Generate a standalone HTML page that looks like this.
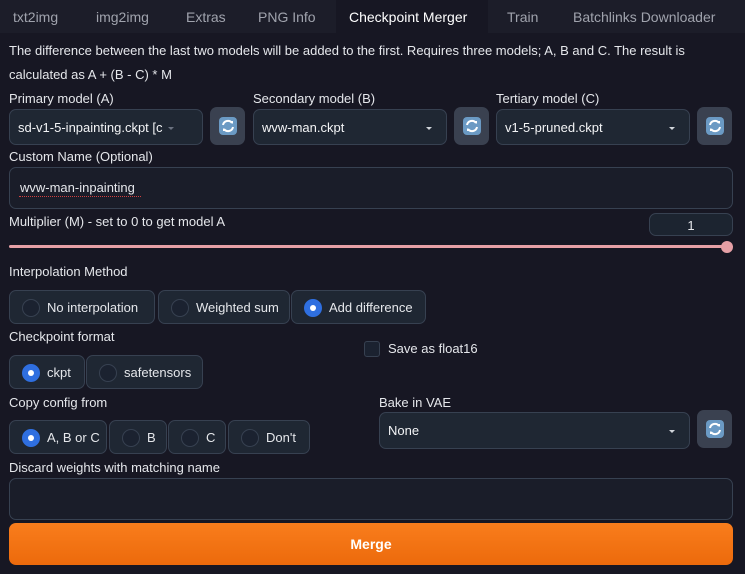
<!DOCTYPE html>
<html><head><style>
*{box-sizing:border-box;margin:0;padding:0}
body{width:745px;height:574px;background:#171723;font-family:"Liberation Sans",sans-serif;color:#e5e7eb;position:relative;overflow:hidden;font-size:13px}
.a{position:absolute;white-space:nowrap}
.tabs{position:absolute;left:0;top:0;width:745px;height:33px;background:#1c1d29}
.tab{position:absolute;top:9px;font-size:14px;color:#a0a3ad}
.act{position:absolute;left:336px;top:0;width:152px;height:33px;background:#171723}
.lbl{position:absolute;font-size:13px;color:#e5e7eb}
.box{position:absolute;background:#1f2733;border:1px solid #374151;border-radius:7px}
.inp{position:absolute;background:#1a1d29;border:1px solid #374151;border-radius:7px}
.dd{font-size:13px;padding:10px 0 0 8px;color:#f3f4f6}
.car{position:absolute;right:14px;top:17px;width:0;height:0;border-left:3px solid transparent;border-right:3px solid transparent;border-top:3px solid #d1d5db}
.btn{position:absolute;width:35px;height:38px;background:#3a4150;border-radius:7px}
.btn svg{position:absolute;left:9px;top:10px}
.r{position:absolute;height:34px;background:#1f2733;border:1px solid #374151;border-radius:7px;font-size:13px;padding:9px 0 0 37px}
.r:before{content:"";position:absolute;left:12px;top:8px;width:16px;height:16px;border-radius:50%;border:1px solid #374151;background:#1b2230}
.r.on:before{background:#2f6fe0;border-color:#2f6fe0}
.r.on:after{content:"";position:absolute;left:18px;top:14px;width:6px;height:6px;border-radius:50%;background:#fff}
</style></head><body>
<div class="tabs"></div><div class="act"></div>
<div class="tab a" style="left:13px">txt2img</div>
<div class="tab a" style="left:96px">img2img</div>
<div class="tab a" style="left:186px">Extras</div>
<div class="tab a" style="left:258px">PNG Info</div>
<div class="tab a" style="left:349px;color:#fff">Checkpoint Merger</div>
<div class="tab a" style="left:507px">Train</div>
<div class="tab a" style="left:573px">Batchlinks Downloader</div>

<div class="lbl a" style="left:9px;top:43px">The difference between the last two models will be added to the first. Requires three models; A, B and C. The result is</div>
<div class="lbl a" style="left:9px;top:67px">calculated as A + (B - C) * M</div>

<div class="lbl a" style="left:9px;top:91px">Primary model (A)</div>
<div class="lbl a" style="left:253px;top:91px">Secondary model (B)</div>
<div class="lbl a" style="left:496px;top:91px">Tertiary model (C)</div>
<div class="box dd" style="left:9px;top:109px;width:194px;height:36px;overflow:hidden">sd-v1-5-inpainting.ckpt [c<div class="car" style="right:28px;border-top-color:#6b7280"></div></div>
<div class="btn" style="left:210px;top:107px"><svg width="18" height="18" viewBox="0 0 18 18"><rect width="18" height="18" rx="4" fill="#6b9ac4"/><path d="M4 8a5 5 0 0 1 9-2M14 10a5 5 0 0 1-9 2" stroke="#fff" stroke-width="2" fill="none"/><path d="M11 4l3 0 0 3zM7 14l-3 0 0-3z" fill="#fff"/></svg></div>
<div class="box dd" style="left:253px;top:109px;width:194px;height:36px">wvw-man.ckpt<div class="car"></div></div>
<div class="btn" style="left:454px;top:107px"><svg width="18" height="18" viewBox="0 0 18 18"><rect width="18" height="18" rx="4" fill="#6b9ac4"/><path d="M4 8a5 5 0 0 1 9-2M14 10a5 5 0 0 1-9 2" stroke="#fff" stroke-width="2" fill="none"/><path d="M11 4l3 0 0 3zM7 14l-3 0 0-3z" fill="#fff"/></svg></div>
<div class="box dd" style="left:496px;top:109px;width:194px;height:36px">v1-5-pruned.ckpt<div class="car"></div></div>
<div class="btn" style="left:697px;top:107px"><svg width="18" height="18" viewBox="0 0 18 18"><rect width="18" height="18" rx="4" fill="#6b9ac4"/><path d="M4 8a5 5 0 0 1 9-2M14 10a5 5 0 0 1-9 2" stroke="#fff" stroke-width="2" fill="none"/><path d="M11 4l3 0 0 3zM7 14l-3 0 0-3z" fill="#fff"/></svg></div>

<div class="lbl a" style="left:9px;top:149px">Custom Name (Optional)</div>
<div class="inp" style="left:9px;top:167px;width:724px;height:42px;padding:12px 0 0 10px;font-size:13px">wvw-man-inpainting</div>
<div class="a" style="left:19px;top:196px;width:122px;border-bottom:1px dotted #d04040"></div>

<div class="lbl a" style="left:9px;top:214px">Multiplier (M) - set to 0 to get model A</div>
<div class="box" style="left:649px;top:213px;width:84px;height:23px;background:#1c2430;text-align:center;padding-top:4px;font-size:13px">1</div>
<div class="a" style="left:9px;top:245px;width:720px;height:3px;background:#e6a0a6;border-radius:2px"></div>
<div class="a" style="left:721px;top:241px;width:12px;height:12px;border-radius:50%;background:#e6a0a6"></div>

<div class="lbl a" style="left:9px;top:264px">Interpolation Method</div>
<div class="r" style="left:9px;top:290px;width:146px">No interpolation</div>
<div class="r" style="left:158px;top:290px;width:132px">Weighted sum</div>
<div class="r on" style="left:291px;top:290px;width:135px">Add difference</div>

<div class="lbl a" style="left:9px;top:329px">Checkpoint format</div>
<div class="a" style="left:364px;top:341px;width:16px;height:16px;border:1px solid #374151;border-radius:3px;background:#1b2230"></div>
<div class="lbl a" style="left:388px;top:341px">Save as float16</div>
<div class="r on" style="left:9px;top:355px;width:76px">ckpt</div>
<div class="r" style="left:86px;top:355px;width:117px">safetensors</div>

<div class="lbl a" style="left:9px;top:395px">Copy config from</div>
<div class="lbl a" style="left:379px;top:395px">Bake in VAE</div>
<div class="r on" style="left:9px;top:420px;width:98px">A, B or C</div>
<div class="r" style="left:109px;top:420px;width:58px">B</div>
<div class="r" style="left:168px;top:420px;width:58px">C</div>
<div class="r" style="left:228px;top:420px;width:82px">Don't</div>
<div class="box dd" style="left:379px;top:412px;width:311px;height:37px">None<div class="car"></div></div>
<div class="btn" style="left:697px;top:410px"><svg width="18" height="18" viewBox="0 0 18 18"><rect width="18" height="18" rx="4" fill="#6b9ac4"/><path d="M4 8a5 5 0 0 1 9-2M14 10a5 5 0 0 1-9 2" stroke="#fff" stroke-width="2" fill="none"/><path d="M11 4l3 0 0 3zM7 14l-3 0 0-3z" fill="#fff"/></svg></div>

<div class="lbl a" style="left:9px;top:460px">Discard weights with matching name</div>
<div class="inp" style="left:9px;top:478px;width:724px;height:42px"></div>
<div class="a" style="left:9px;top:523px;width:724px;height:42px;border-radius:7px;background:linear-gradient(#f97d1c,#ec6a0c);text-align:center;font-weight:bold;font-size:14px;color:#fff;padding-top:13px">Merge</div>
</body></html>
